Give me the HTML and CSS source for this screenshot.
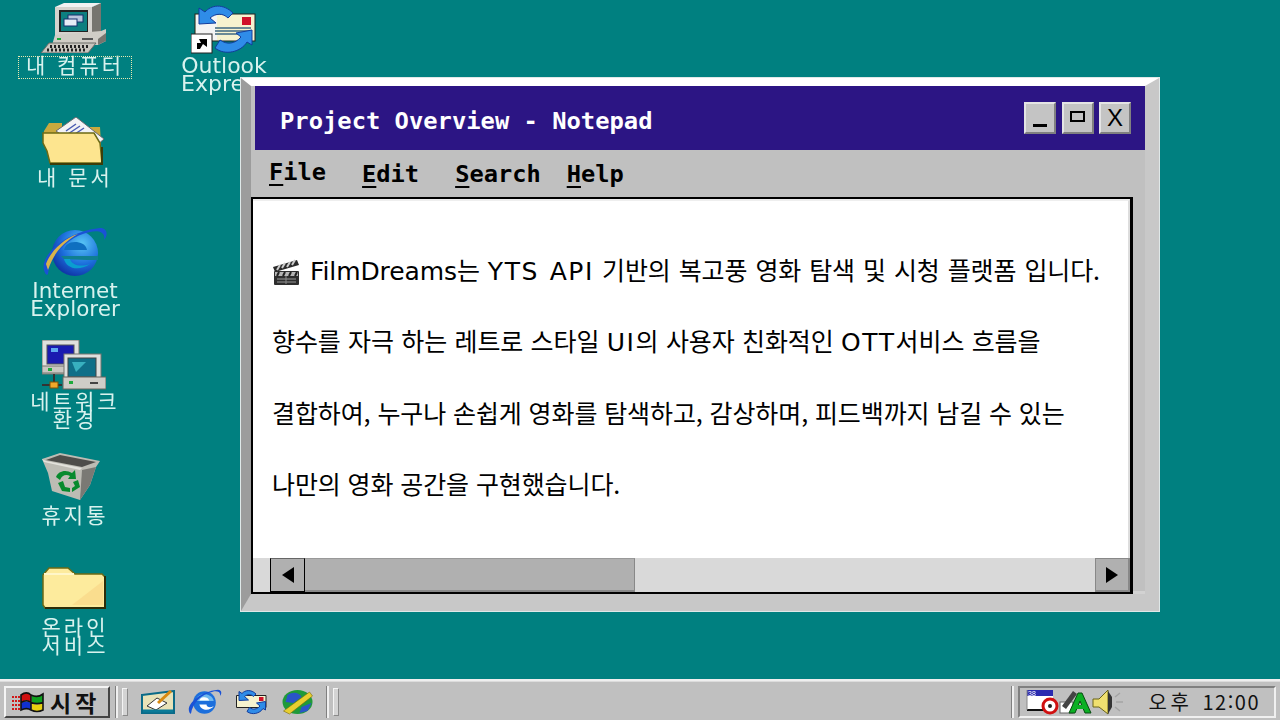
FILE: index.html
```html
<!DOCTYPE html>
<html lang="ko">
<head>
<meta charset="UTF-8" />
<meta name="viewport" content="width=device-width, initial-scale=1.0" />
<title>Project Overview - Notepad</title>
<link rel="stylesheet" href="styles.css">
</head>
<body>

<div class="screen">
  <div class="desktop">

    <div class="icon icon-computer">
      <svg width="68" height="50" viewBox="0 0 68 50">
        <polygon points="15,4 52,4 61,0 61,30 52,35 15,35" fill="#d6d3ce"/>
        <polygon points="52,4 61,0 61,30 52,35" fill="#77756f"/>
        <polygon points="15,4 52,4 61,0 24,0" fill="#f2f2f2"/>
        <rect x="19" y="7" width="29" height="22" fill="#222"/>
        <rect x="21" y="9" width="26" height="19" fill="#0d7f80"/>
        <rect x="28" y="12" width="15" height="7" fill="#b9c6dd" stroke="#14306e"/>
        <rect x="24" y="16" width="13" height="7" fill="#e6ecf5" stroke="#14306e"/>
        <polygon points="15,32 61,28 66,26 66,38 58,42 12,42" fill="#d0cdc6"/>
        <polygon points="58,36 66,30 66,38 58,42" fill="#77756f"/>
        <rect x="17" y="35" width="4" height="2" fill="#1faa3c"/>
        <rect x="42" y="35" width="11" height="2" fill="#555"/>
        <polygon points="9,40 56,40 48,50 1,50" fill="#c9c6bf" stroke="#6b6a66"/>
        <path d="M7,47h40M10,43.5h40" stroke="#222" stroke-width="3" stroke-dasharray="2 2"/>
      </svg>
    </div>
    <div class="label label-focus label-computer">내 컴퓨터</div>

    <div class="icon icon-outlook">
      <svg width="66" height="50" viewBox="0 0 66 50">
        <rect x="4" y="10" width="60" height="27" fill="#f6f2cf" stroke="#222"/>
        <polygon points="5,11 26,11 26,36 5,36" fill="#f4f4f4"/>
        <rect x="51" y="13" width="9" height="8" fill="#d0102a"/>
        <path d="M24,24h36M24,27h36M24,30h36" stroke="#6b8a96" stroke-width="2"/>
        <path d="M42,9 C32,-1 20,1 14,8 L8,4 L8,20 L25,19 L19,14 C25,9 32,9 37,14 Z" fill="#2f8ce8" stroke="#123c9c"/>
        <path d="M24,44 C34,52 50,48 56,38 L61,41 L61,26 L45,29 L50,33 C44,40 36,41 29,36 Z" fill="#2f8ce8" stroke="#123c9c"/>
        <rect x="0" y="30" width="21" height="19" fill="#fff" stroke="#222"/>
        <path d="M6,45 L6,39 L10,39 L8,35 L16,35 L16,43 L12,40 L9,45 Z" fill="#000"/>
      </svg>
    </div>
    <div class="label label-outlook">Outlook<br>Express</div>

    <div class="icon icon-docs">
      <svg width="64" height="48" viewBox="0 0 64 48">
        <path d="M2,14 L7,6 L20,6 L20,10 L58,10 L60,44 L8,44 L6,32 L1,24 Z" fill="#c9a93e"/>
        <polygon points="14,14 34,0 62,22 46,36" fill="#f3f3f5" stroke="#6a6a70"/>
        <path d="M24,14l10,-7M26,17l12,-8M30,19l12,-8" stroke="#4a5cb2" stroke-width="1.5"/>
        <path d="M1,16 L52,16 L58,26 L60,46 L8,46 L5,34 L1,26 Z" fill="#fde58f" stroke="#6c6a14" stroke-width="1.5"/>
        <path d="M60,30 L60,47 L8,47" fill="none" stroke="#3d3c08" stroke-width="2"/>
      </svg>
    </div>
    <div class="label label-docs">내 문서</div>

    <div class="icon icon-ie">
      <svg width="66" height="52" viewBox="0 0 66 52">
        <defs>
          <radialGradient id="ieBall" cx="0.65" cy="0.3" r="0.8">
            <stop offset="0" stop-color="#58c6f5"/>
            <stop offset="0.55" stop-color="#1c6fdc"/>
            <stop offset="1" stop-color="#0d2a9c"/>
          </radialGradient>
        </defs>
        <circle cx="33" cy="27" r="23" fill="url(#ieBall)"/>
        <path d="M22,24 H45 C44,18 38,16 33,16 C27,16 23,19 22,24 Z" fill="#0f6fc0"/>
        <path d="M19,30 H56 L56,34 L45,34 L22,33 Z" fill="#0f7f90"/>
        <path d="M22,33 C24,42 36,46 48,38 C40,41 30,40 28,33 Z" fill="#0a9ed0"/>
        <path d="M2,44 C-2,30 22,6 58,2 C66,2 66,10 62,14 C64,6 56,4 48,6 C26,10 8,30 6,48 C5,50 3,48 2,44 Z" fill="#1a52d6"/>
        <path d="M4,38 C8,26 22,12 36,8 C22,16 12,26 6,44 Z" fill="#d9b44a"/>
      </svg>
    </div>
    <div class="label label-ie">Internet<br>Explorer</div>

    <div class="icon icon-network">
      <svg width="64" height="50" viewBox="0 0 64 50">
        <rect x="0" y="0" width="37" height="34" fill="#dfe0de" stroke="#77756f"/>
        <rect x="5" y="5" width="27" height="19" fill="#1a1ab0" stroke="#555"/>
        <rect x="9" y="8" width="7" height="4" fill="#5fa8f0"/>
        <rect x="0" y="26" width="37" height="7" fill="#c9c7c2" stroke="#77756f"/>
        <rect x="6" y="28" width="4" height="3" fill="#1faa3c"/>
        <rect x="22" y="14" width="37" height="29" fill="#dfe0de" stroke="#77756f"/>
        <rect x="26" y="18" width="28" height="19" fill="#0f6f88" stroke="#444"/>
        <path d="M30,22 L44,22 L34,32 Z" fill="#38b0bf"/>
        <rect x="21" y="37" width="43" height="12" fill="#cfcdc8" stroke="#66645e"/>
        <rect x="27" y="41" width="4" height="3" fill="#1faa3c"/>
        <rect x="48" y="42" width="8" height="2" fill="#444"/>
        <path d="M0,45 H20 M12,34 V45" stroke="#333" stroke-width="2"/>
        <rect x="8" y="42" width="8" height="6" fill="#f2a82a" stroke="#7a5208"/>
      </svg>
    </div>
    <div class="label label-network">네트워크<br>환경</div>

    <div class="icon icon-trash">
      <svg width="60" height="48" viewBox="0 0 60 48">
        <polygon points="0,6 18,0 58,8 54,14 48,32 38,47 10,38 6,20" fill="#bdbcb4"/>
        <polygon points="38,47 48,32 54,14 40,17" fill="#7a7974"/>
        <polygon points="4,7 18,2 54,9 40,14" fill="#4e4d4a"/>
        <polygon points="0,6 4,8 40,15 38,17 2,9" fill="#e3e2dc"/>
        <path d="M14,24 C16,18 24,16 30,20 L33,17 L34,26 L26,26 L28,23 C24,21 20,22 18,27 Z" fill="#078a2d"/>
        <path d="M16,30 L20,38 L28,39 L28,35 L23,34 L21,28 Z" fill="#078a2d"/>
        <path d="M36,27 L38,34 L30,39 L30,35 L33,33 L31,29 Z" fill="#078a2d"/>
      </svg>
    </div>
    <div class="label label-trash">휴지통</div>

    <div class="icon icon-folder">
      <svg width="64" height="42" viewBox="0 0 64 42">
        <path d="M1,8 L7,1 L26,1 L33,7 L60,7 L63,10 L63,41 L3,41 L1,38 Z" fill="#fdeb9d" stroke="#6c6a14" stroke-width="1.5"/>
        <path d="M2,7 H32" stroke="#fff6c9" stroke-width="2"/>
        <path d="M63,9 V41 H3" fill="none" stroke="#2e2d08" stroke-width="2"/>
        <path d="M30,38 L61,38 L61,14 Z" fill="#f8cf80" opacity=".5"/>
      </svg>
    </div>
    <div class="label label-folder">온라인<br>서비스</div>

    <div class="window">
      <div class="title-bar">
        <span class="title-text">Project Overview - Notepad</span>
        <div class="window-buttons">
          <button class="win-btn win-btn-min"><span class="min-glyph"></span></button>
          <button class="win-btn win-btn-max"><span class="max-glyph"></span></button>
          <button class="win-btn win-btn-close">X</button>
        </div>
      </div>
      <div class="menu-bar">
        <span class="menu-item menu-file"><u>F</u>ile</span>
        <span class="menu-item menu-edit"><u>E</u>dit</span>
        <span class="menu-item menu-search"><u>S</u>earch</span>
        <span class="menu-item"><u>H</u>elp</span>
      </div>
      <div class="text-frame">
        <div class="text-area">
          <p class="line-first"><svg class="clapper" width="28" height="26" viewBox="0 0 28 26">
            <path d="M1,8 L25,1 L27,6 L3,13 Z" fill="#2b2b2b"/>
            <path d="M5,11l3,-5M10,9l3,-5M15,8l3,-5M20,6l3,-5" stroke="#ccc" stroke-width="2"/>
            <rect x="2" y="12" width="25" height="14" rx="1" fill="#2e2e2e"/>
            <rect x="3" y="13" width="23" height="4" fill="#b5b5b5"/>
            <path d="M7,13l-2,4M13,13l-2,4M19,13l-2,4M25,13l-2,4" stroke="#222" stroke-width="2"/>
            <path d="M5,20h19M5,23h19" stroke="#999"/>
            <path d="M14,17v8" stroke="#888"/>
          </svg> <span class="latin">FilmDreams</span>는 <span class="latin latin-wide">YTS API</span> 기반의 복고풍 영화 탐색 및 시청 플랫폼 입니다.</p>
          <p class="line-second">향수를 자극 하는 레트로 스타일 <span class="latin latin-wide">UI</span>의 사용자 친화적인 <span class="latin latin-wide">OTT</span>서비스 흐름을</p>
          <p>결합하여, 누구나 손쉽게 영화를 탐색하고, 감상하며, 피드백까지 남길 수 있는</p>
          <p>나만의 영화 공간을 구현했습니다.</p>
        </div>
        <div class="scrollbar">
          <span class="scroll-gutter"></span>
          <button class="scroll-btn"><span class="arrow-left"></span></button>
          <div class="scroll-track"><div class="scroll-thumb"></div></div>
          <button class="scroll-btn scroll-btn-right"><span class="arrow-right"></span></button>
        </div>
      </div>
    </div>

  </div>

  <div class="taskbar">
    <button class="start-btn">
      <svg width="32" height="22" viewBox="0 0 32 22">
        <path d="M0,6h8M0,10h8M0,14h8M0,18h8" stroke="#d01818" stroke-width="2" stroke-dasharray="2 1"/>
        <path d="M9,4 C13,1 16,1 19,4 L19,11 C16,9 13,9 9,11 Z" fill="#d01010"/>
        <path d="M20,4 C23,6 27,6 31,3 L31,11 C27,13 23,13 20,11 Z" fill="#10a020"/>
        <path d="M9,12 C13,10 16,10 19,12 L19,19 C16,17 13,17 9,19 Z" fill="#1030d0"/>
        <path d="M20,12 C23,14 27,14 31,12 L31,19 C27,21 23,21 20,19 Z" fill="#e8d010"/>
        <path d="M9,4 C13,1 16,1 19,4 C23,6 27,6 31,3 L31,19 C27,21 23,21 19,19 C16,17 13,17 9,19 Z M19,4 V19 M9,11.5 C13,9 16,9 19,11.5 C23,13 27,13 31,11.5" fill="none" stroke="#111" stroke-width="1.6"/>
      </svg>
      <span>시작</span>
    </button>
    <span class="divider"></span>
    <span class="grip"></span>
    <div class="quick-launch">
      <svg width="34" height="24" viewBox="0 0 34 24">
        <polygon points="1,5 33,1 33,23 1,23" fill="#e8e2b8" stroke="#0a6a88" stroke-width="2"/>
        <polygon points="6,16 16,8 26,13 15,20" fill="#fff" stroke="#333"/>
        <path d="M17,13 L30,1" stroke="#d88a10" stroke-width="3"/>
        <path d="M2,21 H32" stroke="#0a7a98" stroke-width="3"/>
      </svg>
      <svg width="34" height="28" viewBox="0 0 66 52">
        <circle cx="32" cy="27" r="22" fill="#1c6fdc"/>
        <path d="M14,24 H50 C48,14 38,11 31,11 C22,11 16,17 14,24 Z" fill="#6fb8ee"/>
        <path d="M22,23 C24,18 28,17 32,17 C36,17 40,19 41,23 Z" fill="#fff"/>
        <path d="M22,31 H36 C36,37 44,38 50,34 C46,42 26,46 22,31 Z" fill="#fff"/>
        <path d="M2,44 C-2,30 22,6 58,2 C66,2 66,10 62,14 C64,6 56,4 48,6 C26,10 8,30 6,48 C5,50 3,48 2,44 Z" fill="#1a52d6"/>
      </svg>
      <svg width="33" height="26" viewBox="0 0 66 50">
        <polygon points="3,12 62,12 62,36 3,36" fill="#f6f2cf" stroke="#222" stroke-width="2"/>
        <rect x="48" y="15" width="9" height="8" fill="#d0102a"/>
        <path d="M42,9 C32,-1 20,1 14,8 L8,4 L8,22 L27,21 L19,14 C25,9 32,9 37,14 Z" fill="#2f8ce8" stroke="#123c9c" stroke-width="2"/>
        <path d="M24,44 C34,52 50,48 56,38 L61,41 L61,24 L43,27 L50,33 C44,40 36,41 29,36 Z" fill="#2f8ce8" stroke="#123c9c" stroke-width="2"/>
      </svg>
      <svg width="33" height="26" viewBox="0 0 32 26">
        <ellipse cx="16" cy="13" rx="15" ry="12" fill="#1f9a3a"/>
        <path d="M6,6 C12,2 18,4 20,8 L12,14 L4,13 Z" fill="#2a55c8"/>
        <path d="M20,18 L30,14 L26,22 L18,24 Z" fill="#2a55c8"/>
        <path d="M2,22 L28,3 L31,7 L8,25 Z" fill="#e8cf30" stroke="#7a6a08" stroke-width=".6"/>
      </svg>
    </div>
    <span class="divider divider-ql"></span>
    <span class="grip"></span>
    <span class="taskbar-fill"></span>
    <span class="divider"></span>
    <div class="tray">
      <svg width="34" height="26" viewBox="0 0 34 26">
        <rect x="2" y="1" width="26" height="20" fill="#fff"/>
        <rect x="2" y="1" width="26" height="6" fill="#2a2ab0"/>
        <path d="M2,21 H20" stroke="#111" stroke-width="2"/>
        <path d="M2,1 V21" stroke="#888"/>
        <text x="3" y="7" class="tray-mini">38</text>
        <circle cx="25" cy="17" r="7" fill="#fff" stroke="#d01010" stroke-width="3"/>
        <circle cx="25" cy="17" r="2" fill="#222"/>
      </svg>
      <svg width="33" height="26" viewBox="0 0 33 26">
        <rect x="1" y="13" width="13" height="11" fill="#fff" stroke="#666"/>
        <path d="M3,17 L14,2 L18,5 L7,20 Z" fill="#444"/>
        <path d="M10,24 L19,4 L23,4 L32,24 L26,24 L21,12 L16,24 Z" fill="#0cb024" stroke="#064a10"/>
        <rect x="15" y="16" width="13" height="4" fill="#0cb024"/>
      </svg>
      <svg width="32" height="26" viewBox="0 0 32 26">
        <polygon points="1,10 7,10 16,1 16,25 7,18 1,18" fill="#f0e070" stroke="#6a6418"/>
        <path d="M16,2 L20,8 L20,18 L16,25 Z" fill="#333"/>
        <path d="M24,13h7M23,8l5,-4M23,18l5,4" stroke="#a4a4a4" stroke-width="1.5"/>
      </svg>
      <span class="clock"><span class="clock-ampm">오후</span> 12:00</span>
    </div>
  </div>
</div>

</body>
</html>
```

FILE: styles.css
```css
* {
  box-sizing: border-box;
}

html, body {
  margin: 0;
  padding: 0;
}

.screen {
  width: 1280px;
  height: 720px;
  display: flex;
  flex-direction: column;
  overflow: hidden;
  background-color: #008080;
}

.desktop {
  position: relative;
  flex: 1;
}

/* Desktop icons sit on a free canvas */
.icon {
  position: absolute;
  line-height: 0;
  filter: blur(0.4px);
}

.icon-computer { left: 40px; top: 3px; }
.icon-outlook { left: 191px; top: 4px; }
.icon-docs { left: 42px; top: 117px; }
.icon-ie { left: 42px; top: 226px; }
.icon-network { left: 42px; top: 340px; }
.icon-trash { left: 42px; top: 453px; }
.icon-folder { left: 42px; top: 567px; }

.label {
  position: absolute;
  width: 140px;
  text-align: center;
  color: #d8f2ee;
  font-family: "Noto Sans CJK KR", "Liberation Sans", sans-serif;
  font-size: 21px;
  line-height: 22px;
  letter-spacing: 3px;
  white-space: nowrap;
  filter: blur(0.4px);
}

.label-computer { left: 5px; top: 53px; }
.label-focus::after {
  content: "";
  position: absolute;
  left: 13px;
  top: 3px;
  width: 112px;
  height: 21px;
  border: 1px dotted #e8e8b0;
}
.label-outlook {
  left: 154px;
  top: 57px;
  font-family: "DejaVu Sans", sans-serif;
  font-size: 22px;
  line-height: 18px;
  letter-spacing: 0;
}
.label-docs { left: 5px; top: 165px; }
.label-ie {
  left: 5px;
  top: 282px;
  font-family: "DejaVu Sans", sans-serif;
  font-size: 21.5px;
  line-height: 17.5px;
  letter-spacing: 0;
}
.label-network { left: 5px; top: 391px; line-height: 18px; }
.label-trash { left: 5px; top: 503px; }
.label-folder { left: 5px; top: 617px; line-height: 18px; }

/* Notepad window */
.window {
  position: absolute;
  left: 241px;
  top: 78px;
  width: 918px;
  height: 533px;
  display: flex;
  flex-direction: column;
  background-color: #c0c0c0;
  border-style: solid;
  border-width: 8px 14px 17px 10px;
  border-color: #fff #c8c8c8 #c8c8c8 #9c9c9c;
  outline: 1px solid #dfe8e8;
  box-shadow: inset 0 -3px 0 #d2d2d2;
}

.title-bar {
  height: 64px;
  margin-left: 4px;
  padding: 0 14px 0 25px;
  display: flex;
  align-items: center;
  justify-content: space-between;
  background-color: #2c1584;
}

.title-text {
  padding-top: 6px;
  color: #fff;
  font-family: "DejaVu Sans Mono", monospace;
  font-size: 23.8px;
  font-weight: bold;
}

.window-buttons {
  display: flex;
  gap: 5.5px;
}

.win-btn {
  width: 32px;
  height: 32px;
  padding: 0;
  display: flex;
  align-items: center;
  justify-content: center;
  background-color: #c4c4c4;
  border: 2px solid;
  border-color: #e4e4e4 #808080 #808080 #e4e4e4;
  font-family: "Liberation Sans", sans-serif;
  font-size: 24px;
  color: #000;
}

.min-glyph {
  width: 14px;
  height: 3px;
  margin-top: 14px;
  background-color: #000;
}

.max-glyph {
  width: 15px;
  height: 11px;
  margin-bottom: 4px;
  border: 2px solid #000;
}

.menu-bar {
  height: 47px;
  padding-left: 18px;
  display: flex;
  align-items: center;
  gap: 36px;
  font-family: "DejaVu Sans Mono", monospace;
  font-size: 23.7px;
  font-weight: bold;
  color: #000;
}

.menu-item u {
  text-underline-offset: 4px;
}

.menu-file { margin-top: -3px; }
.menu-search { margin-right: -10px; }

.text-frame {
  flex: 1;
  min-height: 0;
  margin-right: 12px;
  display: flex;
  flex-direction: column;
  background-color: #fff;
  border: 2px solid #000;
  border-right-width: 3px;
}

.text-area {
  flex: 1;
  padding: 51px 0 0 19px;
  font-family: "Noto Sans CJK KR", sans-serif;
  font-size: 25px;
  font-weight: 400;
  color: #000;
  border-top: 2px solid #eee;
  border-right: 2px solid #ddd;
}

.text-area p {
  margin: 0;
  height: 71.3px;
  line-height: 34px;
  letter-spacing: -0.1px;
  white-space: nowrap;
}

.text-area .line-first {
  word-spacing: 1.1px;
}

.text-area .line-second {
  word-spacing: 0.5px;
}

.latin {
  font-family: "DejaVu Sans", sans-serif;
}

.latin-wide {
  letter-spacing: 1.6px;
}

.clapper {
  margin-right: 2px;
  vertical-align: -5px;
}

.scrollbar {
  height: 34px;
  display: flex;
  background-color: #d9d9d9;
}

.scroll-gutter {
  width: 17px;
}

.scroll-btn {
  width: 35px;
  height: 34px;
  padding: 0;
  display: flex;
  align-items: center;
  justify-content: center;
  background-color: #b0b0b0;
  border: 1px solid #000;
  border-top-color: #666;
}

.scroll-btn-right {
  border: 1px solid #888;
  border-right-width: 2px;
  border-bottom-width: 2px;
}

.arrow-left {
  border-style: solid;
  border-width: 8px 12px 8px 0;
  border-color: transparent #000 transparent transparent;
}

.arrow-right {
  border-style: solid;
  border-width: 8px 0 8px 12px;
  border-color: transparent transparent transparent #000;
}

.scroll-track {
  flex: 1;
  display: flex;
}

.scroll-thumb {
  width: 330px;
  background-color: #b0b0b0;
  border-top: 1px solid #999;
  border-right: 1px solid #888;
  border-bottom: 2px solid #888;
}

/* Taskbar */
.taskbar {
  height: 41px;
  padding: 5px 4px 3px 4px;
  display: flex;
  align-items: center;
  background-color: #c0c0c0;
  border-top: 2px solid #efefef;
  box-shadow: inset 0 1px 0 #dcdcdc;
}

.taskbar svg {
  filter: blur(0.3px);
}

.start-btn {
  width: 106px;
  height: 32px;
  padding: 0 0 0 6px;
  display: flex;
  align-items: center;
  gap: 6px;
  background-color: #c0c0c0;
  border: 2px solid;
  border-color: #f4f4f4 #444 #444 #f4f4f4;
  font-family: "Noto Sans CJK KR", sans-serif;
  font-size: 23px;
  font-weight: bold;
  letter-spacing: 4px;
  color: #111;
}

.divider {
  width: 3px;
  height: 32px;
  margin-left: 5px;
  border-left: 1px solid #808080;
  border-right: 2px solid #f0f0f0;
}

.divider-ql {
  margin-left: 12px;
}

.grip {
  width: 6px;
  height: 28px;
  margin-left: 4px;
  background-color: #d4d4d4;
  border: 1px solid;
  border-color: #f4f4f4 #8a8a8a #8a8a8a #f4f4f4;
}

.quick-launch {
  margin-left: 13px;
  display: flex;
  align-items: center;
  gap: 13px;
}

.taskbar-fill {
  flex: 1;
}

.tray {
  width: 258px;
  height: 32px;
  margin-left: 4px;
  padding: 0 14px 0 5px;
  display: flex;
  align-items: center;
  background-color: #c0c0c0;
  border: 2px solid;
  border-color: #808080 #f0f0f0 #f0f0f0 #808080;
}

.tray svg {
  flex: none;
}

.tray-mini {
  font-family: "Liberation Sans", sans-serif;
  font-size: 7px;
  fill: #fff;
}

.clock {
  margin-left: auto;
  font-family: "Noto Sans CJK KR", "DejaVu Sans", sans-serif;
  font-size: 20px;
  letter-spacing: 1.5px;
  word-spacing: 3px;
  color: #111;
  white-space: nowrap;
}

.clock-ampm {
  letter-spacing: 3.5px;
}
```
